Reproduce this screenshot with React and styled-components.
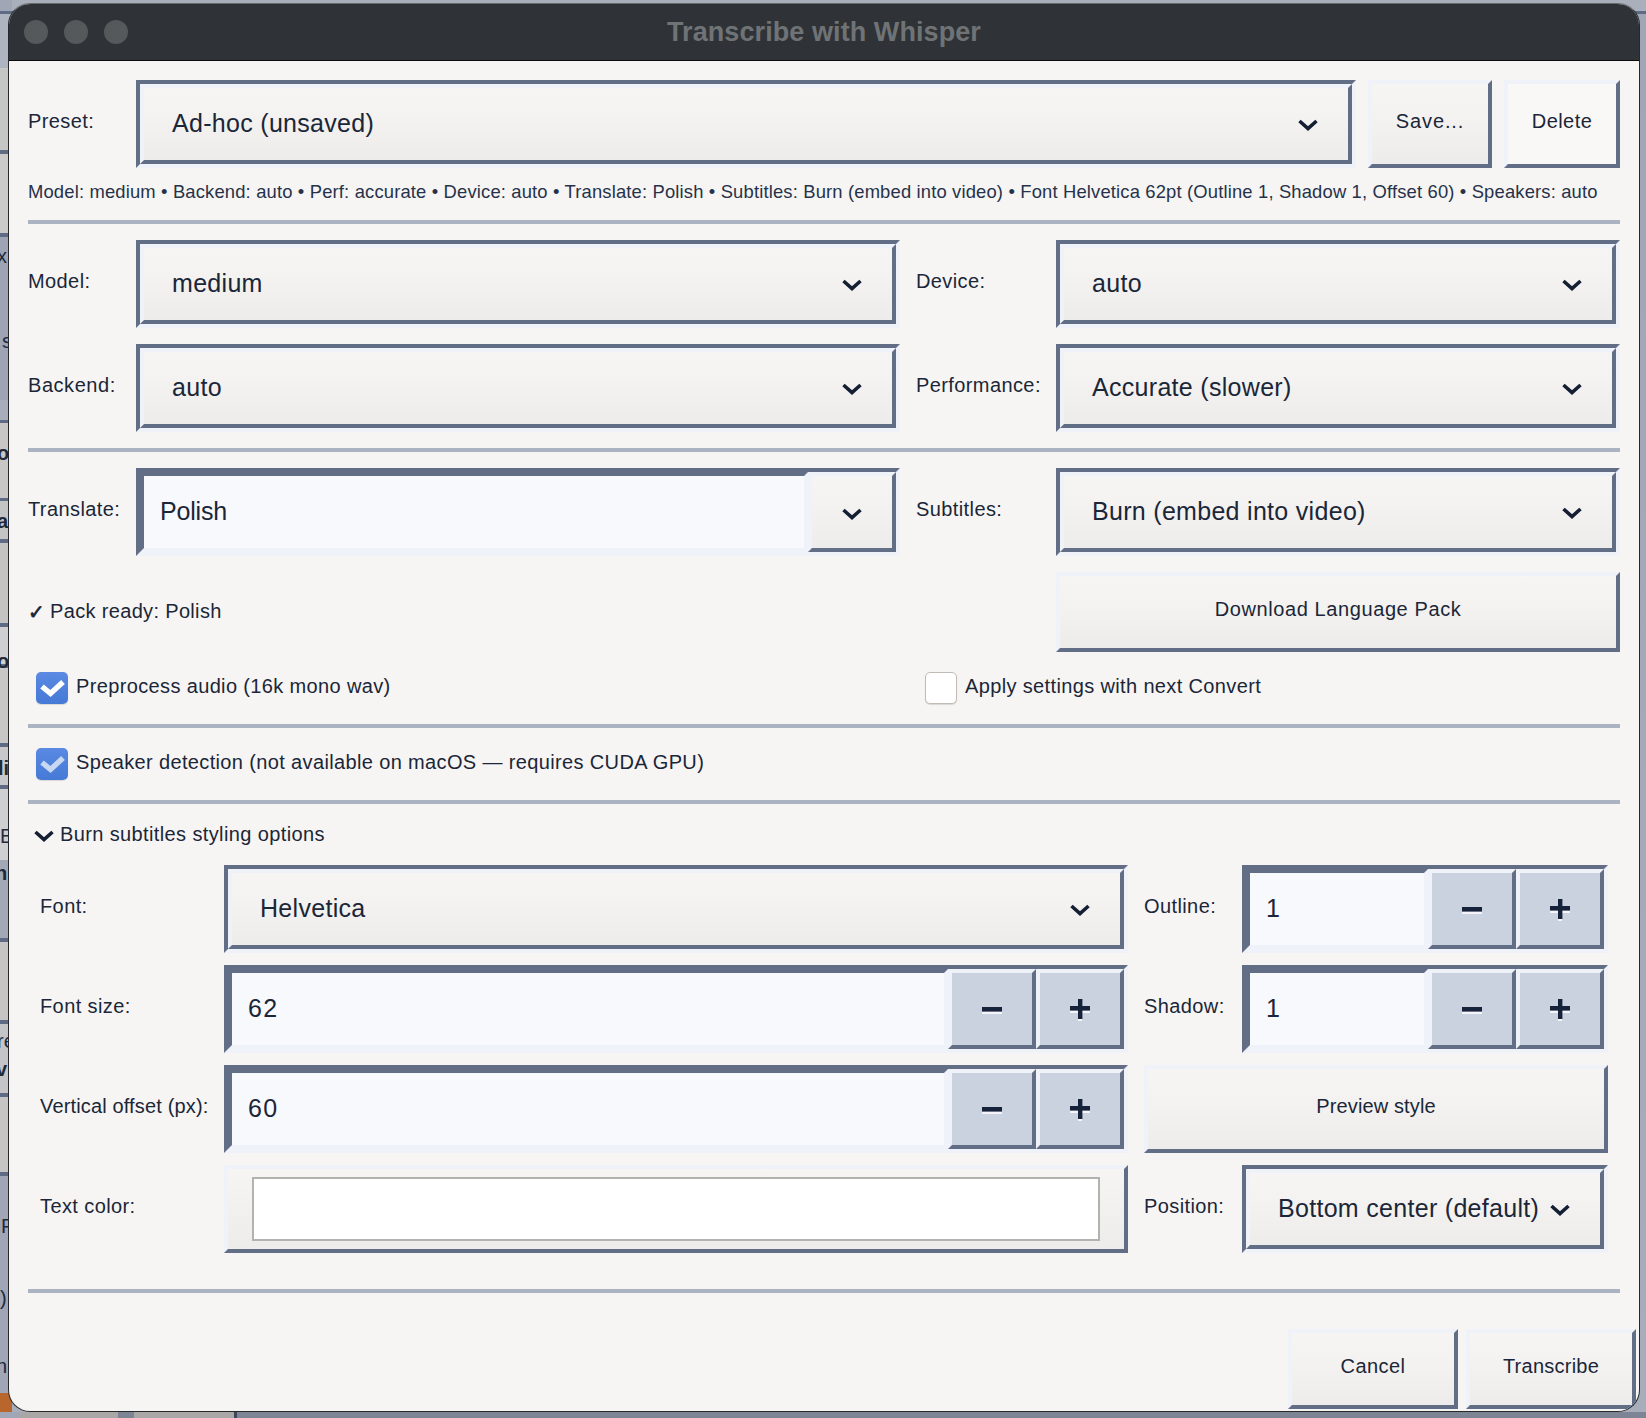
import styled, { createGlobalStyle } from "styled-components"

const DARK = "#626d86"
const LIGHT = "#f0f2f9"

const GlobalStyle = createGlobalStyle`
    html, body {
        margin: 0;
        padding: 0;
        background: #9da3b3;
    }
    * {
        box-sizing: border-box;
    }
`

const Desktop = styled.div`
    position: relative;
    width: 1646px;
    height: 1418px;
    overflow: hidden;
    padding: 3px 6px 6px 8px;
    background: linear-gradient(180deg, #a9afbb 0 11px, #5f6b85 11px 14px, #a0a6b5 14px, #a7adba 100%);
    font-family: "Liberation Sans", Arial, sans-serif;
    color: #1b2638;
`
const LeftStrip = styled.div`
    position: absolute;
    left: 0;
    top: 0;
    width: 12px;
    height: 1418px;
    background: linear-gradient(180deg,
        #9fa6b6 0 11px, #5f6b85 11px 14px, #aeb4c0 14px 68px, #c6c6c5 68px 150px,
        #5f6b85 150px 154px, #cbcac8 154px 233px, #5f6b85 233px 237px,
        #9ea4b4 237px 400px, #a8adb9 400px 420px, #5f6b85 420px 423px, #c8c7c5 423px 498px,
        #5f6b85 498px 501px, #c4c4c4 501px 539px, #5f6b85 539px 543px, #c4c3c1 543px 623px,
        #5f6b85 623px 627px, #cfced0 627px 664px, #5f6b85 664px 668px, #c8c7c5 668px 743px,
        #5f6b85 743px 747px, #c8c8ca 747px 785px, #5f6b85 785px 789px, #cfced0 789px 860px,
        #a2a8b6 860px 938px, #5f6b85 938px 942px, #c6c5c3 942px 1020px, #5f6b85 1020px 1024px,
        #c5c5c7 1024px 1093px, #5f6b85 1093px 1097px, #c6c5c3 1097px 1172px, #5f6b85 1172px 1176px,
        #a0a6b5 1176px 1393px, #b9662c 1393px 1418px);
`
const BottomStrip = styled.div`
    position: absolute;
    left: 0;
    bottom: 0;
    width: 100%;
    height: 6px;
    background: linear-gradient(90deg,
        #9fa6b6 0 20px, #a9a8a6 20px 118px, #7d8595 118px 134px, #a9a8a6 134px 234px,
        #3d465c 234px 237px, #7d8595 237px);
`
const StripText = styled.span`
    position: absolute;
    top: ${props => props.$top}px;
    left: ${props => props.$left}px;
    font-size: 20px;
    font-weight: ${props => (props.$bold ? 700 : 400)};
    color: #1f2a3c;
`
const Window = styled.div`
    position: relative;
    width: 1632px;
    height: 1409px;
    border: 1px solid #26282c;
    border-top-color: #65686c;
    border-radius: 22px;
    background: #f6f5f3;
    overflow: hidden;
`
const TitleBar = styled.div`
    position: relative;
    height: 57px;
    background: #2f3337;
    border-bottom: 1px solid #0a0a0a;
    display: flex;
    align-items: center;
    justify-content: center;
`
const Lights = styled.div`
    position: absolute;
    left: 15px;
    top: 16px;
    display: flex;
    gap: 16px;
`
const Light = styled.div`
    width: 24px;
    height: 24px;
    border-radius: 50%;
    background: #55595c;
`
const Title = styled.div`
    font-size: 27px;
    font-weight: 700;
    letter-spacing: 0.08px;
    color: #6f7376;
`
const Body = styled.div`
    padding: 19px 19px 0;
    display: flex;
    flex-direction: column;
`
const Label = styled.div`
    font-size: 20px;
    letter-spacing: ${props => props.$spacing ?? 0.4}px;
    padding-bottom: 6px;
    padding-left: ${props => props.$indent || 0}px;
    white-space: nowrap;
`
const PresetRow = styled.div`
    display: grid;
    grid-template-columns: 108px 1220px 136px 128px;
    height: 88px;
    align-items: center;
`
const Groove = styled.div`
    height: 88px;
    border: 4px solid;
    border-color: ${DARK} ${LIGHT} ${LIGHT} ${DARK};
    min-width: 0;
`
const ComboFace = styled.div`
    height: 100%;
    border: 4px solid;
    border-color: ${LIGHT} ${DARK} ${DARK} ${LIGHT};
    background: linear-gradient(180deg, #f6f5f3 0%, #f4f3f1 35%, #edecea 100%);
    display: flex;
    align-items: center;
    justify-content: space-between;
    padding: 0 30px 1px 28px;
    font-size: 25px;
    letter-spacing: 0.3px;
    white-space: nowrap;
`
const PushButton = styled.div`
    height: ${props => props.$height || 80}px;
    border: 4px solid;
    border-color: ${LIGHT} ${DARK} ${DARK} ${LIGHT};
    background: ${props => (props.$flat ? "#f9f8f6" : "linear-gradient(180deg, #f6f5f3 0%, #f3f2f0 45%, #edecea 100%)")};
    display: flex;
    align-items: center;
    justify-content: center;
    padding-bottom: 6px;
    font-size: 20px;
    letter-spacing: ${props => props.$spacing ?? 0.45}px;
    margin-left: ${props => props.$left || 0}px;
`
const Summary = styled.div`
    height: 52px;
    padding-top: 12px;
    font-size: 18.4px;
    letter-spacing: 0.16px;
    line-height: 24px;
    color: #26324a;
    white-space: nowrap;
`
const Separator = styled.div`
    height: 4px;
    background: #abb3c2;
    flex-shrink: 0;
    margin: ${props => props.$before || 0}px 0 ${props => props.$after || 0}px;
`
const FormGrid = styled.div`
    display: grid;
    grid-template-columns: 108px 764px 156px 564px;
    row-gap: 16px;
    align-items: center;
`
const CheckRow = styled.div`
    height: 32px;
    margin-top: ${props => props.$top || 0}px;
    display: grid;
    grid-template-columns: 889px 1fr;
    padding-left: 8px;
`
const CheckItem = styled.div`
    display: flex;
    align-items: center;
    gap: 8px;
    font-size: 20px;
    letter-spacing: 0.36px;
    white-space: nowrap;
    span {
        padding-bottom: 3px;
    }
`
const CheckBox = styled.div`
    width: 32px;
    height: 32px;
    flex-shrink: 0;
    border-radius: 5px;
    background: ${props => (props.$checked ? "linear-gradient(180deg, #5a8ae2, #457ad6)" : "#ffffff")};
    border: ${props => (props.$checked ? "none" : "1.5px solid #c2bcb7")};
    box-shadow: 0 1px 1px rgba(0, 0, 0, 0.12);
`
const PackStatus = styled.div`
    font-size: 20px;
    letter-spacing: 0.33px;
    display: flex;
    gap: 5px;
    grid-column: 1 / 4;
    b {
        font-family: "DejaVu Sans", sans-serif;
        font-weight: 400;
        -webkit-text-stroke: 0.7px #1b2638;
    }
`
const Disclosure = styled.div`
    height: 61px;
    display: flex;
    align-items: center;
    padding-left: 6px;
    gap: 6px;
    font-size: 20px;
    letter-spacing: 0.38px;
`
const StyleGrid = styled.div`
    display: grid;
    grid-template-columns: 184px 904px 114px 366px;
    row-gap: 12px;
    padding: 0 12px;
    align-items: center;
`
const Spin = styled(Groove)`
    display: flex;
`
const LineEdit = styled.div`
    flex: 1;
    min-width: 0;
    border: 4px solid;
    border-color: ${DARK} ${LIGHT} ${LIGHT} ${DARK};
    background: #f8f9fd;
    display: flex;
    align-items: center;
    padding: 0 0 1px 16px;
    font-size: 25px;
    letter-spacing: ${props => props.$spacing ?? 1.4}px;
`
const SpinButton = styled.div`
    width: 88px;
    flex-shrink: 0;
    border: 4px solid;
    border-color: ${LIGHT} ${DARK} ${DARK} ${LIGHT};
    background: ${props => (props.$plain ? "linear-gradient(180deg, #f6f5f3 0%, #f3f2f0 45%, #edecea 100%)" : "#cbd2df")};
    display: flex;
    align-items: center;
    justify-content: center;
`
const ColorButton = styled.div`
    height: 88px;
    border: 4px solid;
    border-color: ${LIGHT} ${DARK} ${DARK} ${LIGHT};
    background: linear-gradient(180deg, #f6f5f3 0%, #edecea 100%);
    padding: 8px 24px;
`
const Swatch = styled.div`
    height: 64px;
    background: #ffffff;
    border: 2px solid #b2b2b0;
`
const PreviewCell = styled.div`
    grid-column: 3 / 5;
    padding-left: 16px;
`
const Footer = styled.div`
    display: flex;
    justify-content: flex-end;
    gap: 8px;
    margin-right: -16px;
    margin-top: 36px;
    > div {
        width: 170px;
    }
`

function Chevron() {
    return (
        <svg width="20" height="12" viewBox="0 0 20 12" fill="none" style={{ flexShrink: 0, marginTop: 3 }}>
            <path d="M1.5 2 L10 9.5 L18.5 2" stroke="#141f33" strokeWidth="3.6" />
        </svg>
    )
}

function Tick({ color }) {
    return (
        <svg width="32" height="32" viewBox="0 0 32 32" fill="none" style={{ display: "block" }}>
            <path d="M6 14.5 L14.5 21.5 L27 10" stroke={color} strokeWidth="5.4" />
        </svg>
    )
}

function Minus() {
    return (
        <svg width="20" height="7" viewBox="0 0 20 7" style={{ marginTop: 2 }}>
            <rect x="0" y="0" width="20" height="7" fill="#f3f5fa" />
            <rect x="0" y="0" width="20" height="4.6" fill="#16223a" />
        </svg>
    )
}

function Plus() {
    return (
        <svg width="20" height="22" viewBox="0 0 20 22" style={{ marginTop: 2 }}>
            <rect x="8" y="0" width="4" height="22" fill="#f3f5fa" />
            <rect x="0" y="7" width="20" height="7" fill="#f3f5fa" />
            <rect x="8" y="0" width="4.4" height="20" fill="#16223a" />
            <rect x="0" y="7" width="20" height="4.6" fill="#16223a" />
        </svg>
    )
}

function Combo({ value }) {
    return (
        <Groove>
            <ComboFace>
                {value}
                <Chevron />
            </ComboFace>
        </Groove>
    )
}

function SpinBox({ value }) {
    return (
        <Spin>
            <LineEdit>{value}</LineEdit>
            <SpinButton><Minus /></SpinButton>
            <SpinButton><Plus /></SpinButton>
        </Spin>
    )
}

const stripTexts = [
    { top: 245, left: -3, text: "x" },
    { top: 330, left: 2, text: "s" },
    { top: 442, left: -3, text: "or", bold: true },
    { top: 510, left: -3, text: "a", bold: true },
    { top: 650, left: -3, text: "ov", bold: true },
    { top: 757, left: -2, text: "li", bold: true },
    { top: 825, left: 0, text: "E" },
    { top: 862, left: -5, text: "n", bold: true },
    { top: 1030, left: -3, text: "re" },
    { top: 1058, left: -4, text: "v", bold: true },
    { top: 1215, left: 1, text: "F" },
    { top: 1287, left: 0, text: ")" },
    { top: 1355, left: -4, text: "n" },
]

export default function App() {
    return (
        <Desktop>
            <GlobalStyle />
            <LeftStrip />
            <BottomStrip />
            {stripTexts.map((t) => (
                <StripText key={t.top} $top={t.top} $left={t.left} $bold={t.bold}>{t.text}</StripText>
            ))}
            <Window>
                <TitleBar>
                    <Lights>
                        <Light />
                        <Light />
                        <Light />
                    </Lights>
                    <Title>Transcribe with Whisper</Title>
                </TitleBar>
                <Body>
                    <PresetRow>
                        <Label>Preset:</Label>
                        <Combo value="Ad-hoc (unsaved)" />
                        <PushButton $height={88} $left={12} $spacing={0.9}>Save...</PushButton>
                        <PushButton $height={88} $left={12} $flat>Delete</PushButton>
                    </PresetRow>
                    <Summary>
                        Model: medium • Backend: auto • Perf: accurate • Device: auto • Translate: Polish • Subtitles: Burn (embed into video) • Font Helvetica 62pt (Outline 1, Shadow 1, Offset 60) • Speakers: auto
                    </Summary>
                    <Separator $after={16} />
                    <FormGrid>
                        <Label>Model:</Label>
                        <Combo value="medium" />
                        <Label $indent={16}>Device:</Label>
                        <Combo value="auto" />
                        <Label $spacing={0.55}>Backend:</Label>
                        <Combo value="auto" />
                        <Label $indent={16}>Performance:</Label>
                        <Combo value="Accurate (slower)" />
                    </FormGrid>
                    <Separator $before={16} $after={16} />
                    <FormGrid>
                        <Label>Translate:</Label>
                        <Spin>
                            <LineEdit $spacing={-0.2}>Polish</LineEdit>
                            <SpinButton $plain><Chevron /></SpinButton>
                        </Spin>
                        <Label $indent={16}>Subtitles:</Label>
                        <Combo value="Burn (embed into video)" />
                        <PackStatus><b>✓</b>Pack ready: Polish</PackStatus>
                        <PushButton $spacing={0.6}>Download Language Pack</PushButton>
                    </FormGrid>
                    <CheckRow $top={20}>
                        <CheckItem>
                            <CheckBox $checked><Tick color="#ffffff" /></CheckBox>
                            <span>Preprocess audio (16k mono wav)</span>
                        </CheckItem>
                        <CheckItem>
                            <CheckBox />
                            <span>Apply settings with next Convert</span>
                        </CheckItem>
                    </CheckRow>
                    <Separator $before={20} $after={20} />
                    <CheckRow>
                        <CheckItem>
                            <CheckBox $checked><Tick color="#c9d8f2" /></CheckBox>
                            <span>Speaker detection (not available on macOS — requires CUDA GPU)</span>
                        </CheckItem>
                    </CheckRow>
                    <Separator $before={20} />
                    <Disclosure>
                        <Chevron />
                        Burn subtitles styling options
                    </Disclosure>
                    <StyleGrid>
                        <Label>Font:</Label>
                        <Combo value="Helvetica" />
                        <Label $indent={16}>Outline:</Label>
                        <SpinBox value="1" />
                        <Label>Font size:</Label>
                        <SpinBox value="62" />
                        <Label $indent={16}>Shadow:</Label>
                        <SpinBox value="1" />
                        <Label $spacing={0.15}>Vertical offset (px):</Label>
                        <SpinBox value="60" />
                        <PreviewCell>
                            <PushButton $height={88} $spacing={0.13}>Preview style</PushButton>
                        </PreviewCell>
                        <Label>Text color:</Label>
                        <ColorButton><Swatch /></ColorButton>
                        <Label $indent={16}>Position:</Label>
                        <Combo value="Bottom center (default)" />
                    </StyleGrid>
                    <Separator $before={36} />
                    <Footer>
                        <PushButton>Cancel</PushButton>
                        <PushButton $spacing={0.25}>Transcribe</PushButton>
                    </Footer>
                </Body>
            </Window>
        </Desktop>
    )
}
